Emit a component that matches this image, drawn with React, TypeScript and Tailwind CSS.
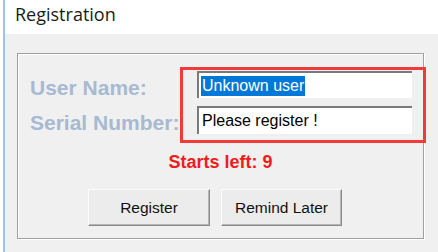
import React from "react";

export default function App() {
  return (
    <div className="w-[438px] h-[252px] bg-white overflow-hidden relative">
      <div className="ml-[3px] h-full border-l-2 border-[#9ec3ea] flex flex-col">
        <div
          className="h-[34px] bg-white flex items-center pl-[10px] pb-[5px] text-[18px] text-[#1b1b1b]"
          style={{ fontFamily: '"Open Sans", "Noto Sans", sans-serif' }}
        >
          Registration
        </div>
        <div className="flex-1 bg-[#f0f0f0] pt-[19px] pl-[12px]">
          <div
            className="relative w-[407px] h-[186px] border border-[#a0a0a0] shadow-[inset_1px_1px_0_#fff,1px_1px_0_#fff] flex flex-col"
            style={{ fontFamily: '"Liberation Sans", Arial, sans-serif' }}
          >
            <div className="pt-[17px] pl-[12px] flex flex-col gap-[8px]">
              <div className="flex items-center">
                <div className="w-[167px] text-[21px] font-bold text-[#a6bad2] leading-none pt-[5px]">
                  User Name:
                </div>
                <div className="w-[215px] h-[27px] bg-white border-t-2 border-l-2 border-[#7a7a7a] flex items-center pl-[2px]">
                  <span className="bg-[#0078d7] text-white text-[16px] leading-[20px] px-[1px]">
                    Unknown user
                  </span>
                </div>
              </div>
              <div className="flex items-center">
                <div className="w-[167px] text-[21px] font-bold text-[#a6bad2] leading-none whitespace-nowrap pt-[5px]">
                  Serial Number:
                </div>
                <div className="w-[215px] h-[28px] bg-white border-t-2 border-l-2 border-[#7a7a7a] flex items-center pl-[3px] text-[16px] text-black">
                  Please register !
                </div>
              </div>
            </div>
            <div className="mt-[18px] text-center text-[18px] leading-[21px] font-bold text-[#f01c1c]">
              Starts left: 9
            </div>
            <div className="mt-[16px] pl-[70px] flex gap-[11px]">
              <button className="w-[122px] h-[37px] bg-[#ececec] border border-t-[#fbfbfb] border-l-[#fbfbfb] border-b-[#8a8a8a] border-r-[#8a8a8a] shadow-[inset_-1px_-1px_0_#b5b5b5] text-[15.5px] text-[#111]">
                Register
              </button>
              <button className="w-[121px] h-[37px] bg-[#ececec] border border-t-[#fbfbfb] border-l-[#fbfbfb] border-b-[#8a8a8a] border-r-[#8a8a8a] shadow-[inset_-1px_-1px_0_#b5b5b5] text-[15.5px] text-[#111]">
                Remind Later
              </button>
            </div>
            <div className="absolute left-[162px] top-[13px] w-[246px] h-[76px] border-[3px] border-[#f23a3a] pointer-events-none" />
          </div>
        </div>
      </div>
    </div>
  );
}
